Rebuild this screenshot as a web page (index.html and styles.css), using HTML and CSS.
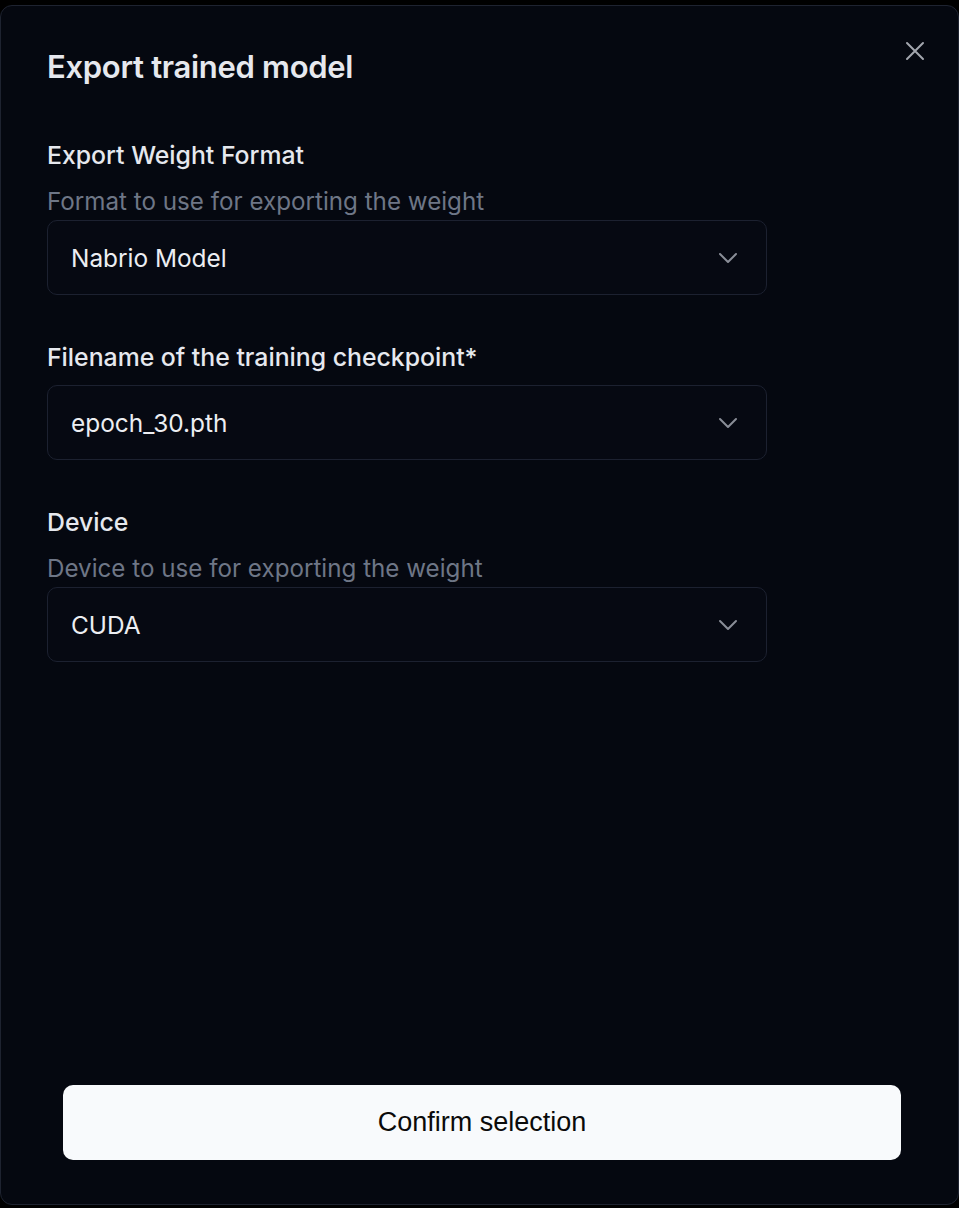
FILE: index.html
```html
<!DOCTYPE html>
<html lang="en">
<head>
<meta charset="utf-8">
<title>Export trained model</title>
<link rel="stylesheet" href="styles.css">
</head>
<body>
<div class="dialog">
  <button class="close" aria-label="Close">
    <svg width="20" height="20" viewBox="0 0 20 20"><path d="M2 2 L18 18 M18 2 L2 18" stroke="currentColor" stroke-width="2" stroke-linecap="round" fill="none"/></svg>
  </button>
  <h1 class="title">Export trained model</h1>

  <div class="field first">
    <div class="label">Export Weight Format</div>
    <div class="desc">Format to use for exporting the weight</div>
    <div class="select">
      <span class="value">Nabrio Model</span>
      <svg class="chev" width="20" height="12" viewBox="0 0 20 12"><polyline points="2,2 10,10 18,2" stroke="currentColor" stroke-width="2" stroke-linecap="round" stroke-linejoin="round" fill="none"/></svg>
    </div>
  </div>

  <div class="field">
    <div class="label">Filename of the training checkpoint*</div>
    <div class="select">
      <span class="value">epoch_30.pth</span>
      <svg class="chev" width="20" height="12" viewBox="0 0 20 12"><polyline points="2,2 10,10 18,2" stroke="currentColor" stroke-width="2" stroke-linecap="round" stroke-linejoin="round" fill="none"/></svg>
    </div>
  </div>

  <div class="field">
    <div class="label">Device</div>
    <div class="desc">Device to use for exporting the weight</div>
    <div class="select">
      <span class="value">CUDA</span>
      <svg class="chev" width="20" height="12" viewBox="0 0 20 12"><polyline points="2,2 10,10 18,2" stroke="currentColor" stroke-width="2" stroke-linecap="round" stroke-linejoin="round" fill="none"/></svg>
    </div>
  </div>

  <div class="footer">
    <button class="confirm">Confirm selection</button>
  </div>
</div>
</body>
</html>
```

FILE: styles.css
```css
* { box-sizing: border-box; }

html, body {
  margin: 0;
  padding: 0;
  background: #000000;
}

body {
  font-family: "Inter", "Noto Sans", sans-serif;
  color: #e5e7eb;
}

.dialog {
  position: relative;
  margin-top: 5px;
  width: 959px;
  height: 1200px;
  background: #050810;
  border: 1px solid #1e2330;
  border-radius: 12px;
  padding: 43px 47px 44px 46px;
  display: flex;
  flex-direction: column;
}

.close {
  position: absolute;
  top: 30px;
  right: 28px;
  width: 30px;
  height: 30px;
  padding: 0;
  border: 0;
  background: transparent;
  color: #a3a6ae;
  display: flex;
  align-items: center;
  justify-content: center;
}

.title {
  margin: 0;
  font-size: 31px;
  line-height: 36px;
  font-weight: 600;
  letter-spacing: -0.3px;
  color: #e6e8ee;
}

.field {
  margin-top: 46px;
  width: 720px;
}

.field.first {
  margin-top: 54px;
}

.label {
  font-size: 24.8px;
  line-height: 32px;
  font-weight: 500;
  color: #e6e8ee;
  margin-bottom: 12px;
}

.desc {
  font-size: 24.2px;
  line-height: 32px;
  font-weight: 400;
  color: #6e7686;
  margin-top: 15px;
  margin-bottom: 2px;
}

.select {
  height: 75px;
  border: 1px solid #1c2130;
  border-radius: 10px;
  background: #060912;
  display: flex;
  align-items: center;
  justify-content: space-between;
  padding: 0 28px 0 23px;
}

.value {
  font-size: 24.4px;
  line-height: 32px;
  color: #eceef2;
}

.chev {
  color: #8a8e98;
}

.footer {
  margin-top: auto;
  padding: 0 11px 0 16px;
}

.confirm {
  width: 838px;
  height: 75px;
  border: 0;
  border-radius: 10px;
  background: #f8fafc;
  color: #0a0a0a;
  font-family: "Liberation Sans", Arial, sans-serif;
  font-size: 27px;
  font-weight: 400;
}
```
